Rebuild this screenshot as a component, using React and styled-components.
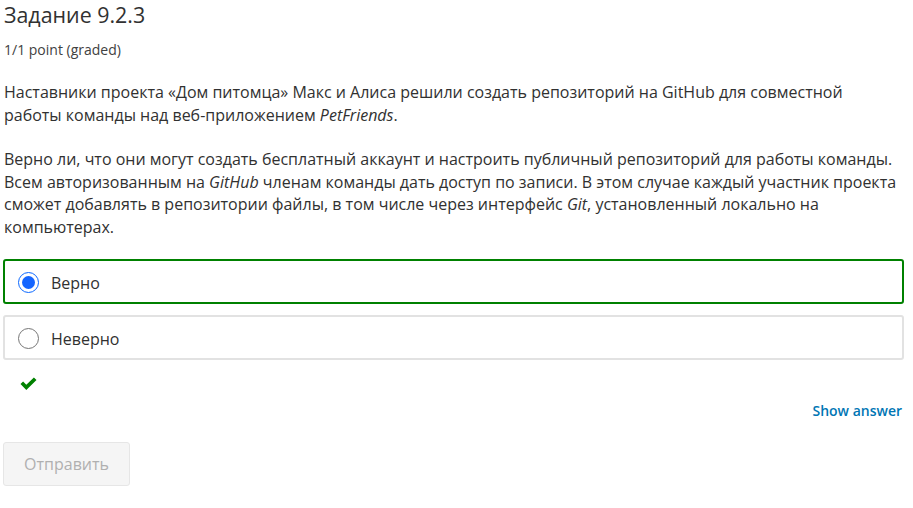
import React, { useState } from 'react';
import styled, { createGlobalStyle } from 'styled-components';

const GlobalStyle = createGlobalStyle`
  html, body {
    margin: 0;
    padding: 0;
    background: #fff;
  }
  body {
    font-family: "Open Sans", "Noto Sans", sans-serif;
    color: #313131;
  }
`;

const Problem = styled.div`
  width: 901px;
  padding: 0 9px 0 3px;
`;

const Title = styled.h3`
  margin: 0;
  padding-left: 1px;
  font-size: 21.4px;
  font-weight: 400;
  line-height: 30px;
  color: #313131;
`;

const Points = styled.div`
  margin-top: 11px;
  padding-left: 1px;
  font-size: 14px;
  line-height: 18px;
  color: #414141;
`;

const Text = styled.p`
  margin: ${(p) => p.top || 0}px 0 0;
  padding-left: 1px;
  font-size: 16px;
  line-height: 22.5px;
  color: #313131;
`;

const Options = styled.div`
  margin-top: 21px;
  display: flex;
  flex-direction: column;
  gap: 11px;
`;

const Option = styled.label`
  box-sizing: border-box;
  height: 45px;
  display: flex;
  align-items: center;
  gap: 12px;
  padding: 2px 0 0 13px;
  border: 2px solid ${(p) => (p.correct ? '#008100' : '#e2e2e2')};
  border-radius: 3px;
  font-size: 16px;
  color: #313131;
  cursor: pointer;
`;

const Radio = styled.span`
  box-sizing: border-box;
  width: 21px;
  height: 21px;
  border-radius: 50%;
  border: 1px solid ${(p) => (p.checked ? '#0b68ff' : '#767676')};
  display: flex;
  align-items: center;
  justify-content: center;
  &::after {
    content: '';
    width: 13px;
    height: 13px;
    border-radius: 50%;
    background: ${(p) => (p.checked ? '#1465ff' : 'transparent')};
  }
`;

const Status = styled.div`
  margin-top: 17px;
  padding-left: 16px;
  height: 14px;
  display: flex;
  align-items: center;
`;

const ActionRow = styled.div`
  margin-top: 10px;
  display: flex;
  justify-content: flex-end;
  padding-right: 2px;
`;

const ShowAnswer = styled.a`
  font-size: 14px;
  font-weight: 600;
  color: #0075b4;
  text-decoration: none;
  cursor: pointer;
`;

const SubmitButton = styled.button`
  margin-top: 22px;
  box-sizing: border-box;
  width: 127px;
  height: 44px;
  border: 1px solid #e6e6e6;
  border-radius: 3px;
  background: #f5f5f5;
  font-family: "Open Sans", sans-serif;
  font-size: 16px;
  color: #b0b0b0;
`;

const Check = () => (
  <svg width="19" height="14" viewBox="0 0 19 14">
    <path d="M1.5 7 L4.1 4.6 L7.3 7.7 L14.9 0.6 L17.5 3.1 L7.3 12.9 Z" fill="#008100" />
  </svg>
);

export default function App() {
  const [choice, setChoice] = useState('yes');
  return (
    <Problem>
      <GlobalStyle />
      <Title>Задание 9.2.3</Title>
      <Points>1/1 point (graded)</Points>
      <Text top={22}>
        Наставники проекта «Дом питомца» Макс и Алиса решили создать репозиторий на GitHub для совместной
        работы команды над веб-приложением <em>PetFriends</em>.
      </Text>
      <Text top={22}>
        Верно ли, что они могут создать бесплатный аккаунт и настроить публичный репозиторий для работы команды.
        Всем авторизованным на <em>GitHub</em> членам команды дать доступ по записи. В этом случае каждый участник проекта
        сможет добавлять в репозитории файлы, в том числе через интерфейс <em>Git</em>, установленный локально на
        компьютерах.
      </Text>
      <Options>
        <Option correct={choice === 'yes'} onClick={() => setChoice('yes')}>
          <Radio checked={choice === 'yes'} />
          Верно
        </Option>
        <Option correct={choice === 'no'} onClick={() => setChoice('no')}>
          <Radio checked={choice === 'no'} />
          Неверно
        </Option>
      </Options>
      <Status>
        <Check />
      </Status>
      <ActionRow>
        <ShowAnswer>Show answer</ShowAnswer>
      </ActionRow>
      <SubmitButton disabled>Отправить</SubmitButton>
    </Problem>
  );
}
